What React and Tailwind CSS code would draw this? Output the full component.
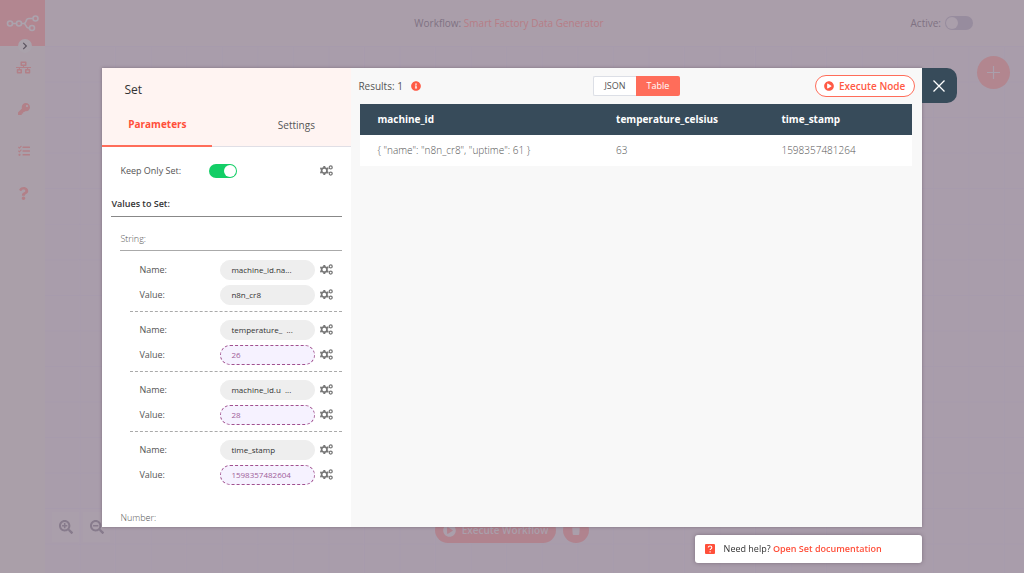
import React, { useState } from "react";
import {
  FaNetworkWired, FaKey, FaTasks, FaQuestion, FaSearchPlus, FaSearchMinus,
  FaPlayCircle, FaTrash, FaInfoCircle, FaChevronRight,
} from "react-icons/fa";

const strings = [
  { name: "machine_id.na...", value: "n8n_cr8", expression: false },
  { name: "temperature_  ...", value: "26", expression: true },
  { name: "machine_id.u  ...", value: "28", expression: true },
  { name: "time_stamp", value: "1598357482604", expression: true },
];

const navItems = [
  { label: "Workflows", Icon: FaNetworkWired, size: 15 },
  { label: "Credentials", Icon: FaKey, size: 12 },
  { label: "Executions", Icon: FaTasks, size: 12 },
  { label: "Help", Icon: FaQuestion, size: 13 },
];

function Logo() {
  return (
    <svg width="34" height="18" viewBox="0 0 34 18" fill="none" stroke="#aba3ad" strokeWidth="1.6" aria-hidden="true">
      <circle cx="4" cy="9.5" r="2.5" />
      <circle cx="13" cy="9.5" r="2.5" />
      <circle cx="29.5" cy="4.5" r="2.5" />
      <circle cx="26" cy="14" r="2.5" />
      <path d="M6.6 9.5h3.8M15.6 9.5h2.2c3.2 0 1.2-5 5-5h4.1M17.8 9.5c2.6 0 1.8 4.5 4.4 4.5h1.2" />
    </svg>
  );
}

function Sidebar() {
  return (
    <aside className="flex w-[45px] shrink-0 flex-col bg-[#aa9fa9]">
      <a href="#home" aria-label="Home" className="relative flex h-[46px] items-center justify-center bg-[#b28690]">
        <Logo />
        <span className="absolute -bottom-[7px] left-[18px] flex size-[14px] items-center justify-center rounded-full bg-[#aaa2ab]">
          <FaChevronRight size={8} color="#5c5561" />
        </span>
      </a>
      <nav className="flex flex-col pl-[2px]">
        {navItems.map(({ label, Icon, size }) => (
          <a key={label} href="#nav" aria-label={label} className="flex h-[42px] items-center justify-center text-[#b28088]">
            <Icon size={size} />
          </a>
        ))}
      </nav>
    </aside>
  );
}

function Canvas() {
  return (
    <div className="relative flex-1">
      <svg className="absolute inset-0 size-full" aria-hidden="true">
        <defs>
          <pattern id="grid" width="35.55" height="35.55" patternUnits="userSpaceOnUse">
            <path d="M0 0.5H36M35 0V36" stroke="#a79bac" strokeWidth="1" fill="none" />
          </pattern>
        </defs>
        <rect width="100%" height="100%" fill="url(#grid)" />
      </svg>
      <button aria-label="Add node" className="absolute top-[10px] right-[14px] flex size-[33px] items-center justify-center rounded-full bg-[#b2868f]">
        <svg width="13" height="13" viewBox="0 0 13 13" stroke="#aa9fab" strokeWidth="1.2"><path d="M6.5 0v13M0 6.5h13" /></svg>
      </button>
      <div className="absolute bottom-[31px] left-[7px] flex gap-1 text-[#877b8c]">
        <button aria-label="Zoom in" className="flex h-[30px] w-[27px] items-center justify-center bg-[#aa9fab]"><FaSearchPlus size={14} /></button>
        <button aria-label="Zoom out" className="flex h-[30px] w-[27px] items-center justify-center bg-[#aa9fab]"><FaSearchMinus size={14} /></button>
      </div>
      <div className="absolute inset-x-0 bottom-[30px] flex justify-center gap-[7px] pr-[45px] text-[#aa9fab]">
        <button className="flex h-[26px] w-[121px] items-center justify-center gap-[6px] rounded-full bg-[#b0838e] text-[10px] font-semibold">
          <FaPlayCircle size={13} />Execute Workflow
        </button>
        <button aria-label="Clear data" className="flex size-[26px] items-center justify-center rounded-full bg-[#b0838e]"><FaTrash size={10} /></button>
      </div>
    </div>
  );
}

function OptionsButton() {
  return (
    <button aria-label="Parameter options" className="flex w-[13px] justify-center">
      <svg width="13" height="11" viewBox="0 0 13 11" fill="none" stroke="#777" aria-hidden="true">
        <circle cx="4.3" cy="5.5" r="2.7" strokeWidth="1.7" />
        <path d="M4.3 0.9v1.6M4.3 8.5v1.6M0.3 3.2l1.4 0.8M6.9 7l1.4 0.8M0.3 7.8l1.4-0.8M6.9 4l1.4-0.8" strokeWidth="2" />
        <circle cx="10.7" cy="2.4" r="1.5" strokeWidth="1.3" />
        <circle cx="10.7" cy="8.6" r="1.5" strokeWidth="1.3" />
      </svg>
    </button>
  );
}

function Field({ id, label, value, expression }) {
  return (
    <div className="flex h-[25px] items-center pl-[9px]">
      <label htmlFor={id} className="flex-1 text-[#555]">{label}</label>
      <input
        id={id}
        defaultValue={value}
        className={
          expression
            ? "h-[20px] w-[95px] rounded-full border border-dashed border-[#a0508f] bg-[#f6f2ff] px-[10px] text-[8px] text-[#a0609a] outline-none"
            : "h-[20px] w-[95px] rounded-full border border-[#eee] bg-[#eee] px-[10px] text-[8px] text-[#333] outline-none"
        }
      />
      <div className="mr-[9px] ml-[5px]"><OptionsButton /></div>
    </div>
  );
}

function Parameters() {
  const [keepOnly, setKeepOnly] = useState(true);
  return (
    <section className="flex w-[249px] shrink-0 flex-col overflow-hidden bg-white text-[9px]">
      <header className="bg-[#fff4f2]">
        <h1 className="px-[22px] pt-[13px] text-[12px] leading-[18px] font-medium text-[#333]">Set</h1>
        <div role="tablist" className="mt-[9px] flex justify-between border-b border-[#e0dfe6]">
          <button role="tab" aria-selected="true" className="-mb-px h-[39px] w-[110px] border-b-2 border-[#ff6d5a] pb-[4px] text-[10px] font-bold text-[#ff4f3a]">Parameters</button>
          <button role="tab" aria-selected="false" className="h-[38px] w-[110px] pb-[4px] text-[10px] text-[#555]">Settings</button>
        </div>
      </header>
      <div className="min-h-0 flex-1 overflow-hidden px-[9px]">
        <div className="mt-[11px] flex h-[25px] items-center pl-[9px]">
          <label htmlFor="keep-only" className="w-[89px] text-[#555]">Keep Only Set:</label>
          <span className="relative flex h-[14px] w-[28px]">
            <input id="keep-only" type="checkbox" checked={keepOnly} onChange={(e) => setKeepOnly(e.target.checked)} className="peer size-full appearance-none rounded-full bg-[#bbb] checked:bg-[#13ce66]" />
            <span className="pointer-events-none absolute top-[1px] left-[1px] size-[12px] rounded-full bg-white peer-checked:left-[15px]" />
          </span>
          <div className="mr-[9px] ml-auto"><OptionsButton /></div>
        </div>
        <h2 className="mt-[13px] border-b border-[#888] pb-[4px] leading-[16px] font-semibold text-[#333]">Values to Set:</h2>
        <div className="pl-[9px]">
          <h3 className="mt-[14px] border-b border-[#aaa] pb-[3px] leading-[16px] font-light text-[#555]">String:</h3>
          <div className="pt-px pl-[10px]">
            {strings.map((s, i) => (
              <div key={s.name} className="border-b border-dashed border-[#aaa] pt-[5px] pb-[4px] last:border-transparent">
                <Field id={"name-" + i} label="Name:" value={s.name} />
                <Field id={"value-" + i} label="Value:" value={s.value} expression={s.expression} />
              </div>
            ))}
          </div>
          <h3 className="mt-[18px] leading-[16px] font-light text-[#555]">Number:</h3>
        </div>
      </div>
    </section>
  );
}

function Results() {
  return (
    <section className="min-w-0 flex-1 bg-[#f8f8f8]">
      <div className="grid h-[36px] grid-cols-[1fr_auto_1fr] items-center px-[7px]">
        <div className="flex items-center gap-[8px] text-[10px] text-[#555]">
          Results: 1 <FaInfoCircle size={10} color="#ff5a45" />
        </div>
        <div className="flex h-[20px] text-[9px]">
          <button className="w-[43px] rounded-l-[2px] border border-r-0 border-[#dcdfe6] bg-white text-[#555]">JSON</button>
          <button className="w-[44px] rounded-r-[2px] bg-[#ff6d5a] text-white">Table</button>
        </div>
        <button className="flex h-[22px] w-[100px] items-center justify-center gap-[5px] justify-self-end rounded-full border border-[#ff6d5a] bg-white text-[10px] font-semibold text-[#ff5a45]">
          <FaPlayCircle size={10} />Execute Node
        </button>
      </div>
      <div className="pr-[10px] pl-[9px]">
        <table className="w-full table-fixed text-left text-[10px]">
          <thead className="bg-[#374b5a] text-white">
            <tr className="h-[31px]">
              <th className="w-[43.3%] pl-[17px] font-bold">machine_id</th>
              <th className="w-[30%] pl-[17px] font-bold">temperature_celsius</th>
              <th className="pl-[17px] font-bold">time_stamp</th>
            </tr>
          </thead>
          <tbody className="bg-white font-light text-[#555]">
            <tr className="h-[31px]">
              <td className="pl-[17px]">{'{ "name": "n8n_cr8", "uptime": 61 }'}</td>
              <td className="pl-[17px]">63</td>
              <td className="pl-[17px]">1598357481264</td>
            </tr>
          </tbody>
        </table>
      </div>
    </section>
  );
}

export default function App() {
  return (
    <div className="flex h-screen overflow-hidden bg-[#a99dab] font-['Open_Sans',sans-serif]">
      <Sidebar />
      <main className="flex min-w-0 flex-1 flex-col">
        <header className="grid h-[46px] grid-cols-[1fr_auto_1fr] items-center bg-[#aa9eaa] pr-[51px] text-[10px] text-[#7f7283]">
          <p className="col-start-2">Workflow: <a href="#workflow" className="text-[#b77d86]">Smart Factory Data Generator</a></p>
          <label className="flex items-center gap-[4px] justify-self-end">
            Active:
            <span className="relative flex h-[14px] w-[28px]">
              <input type="checkbox" className="size-full appearance-none rounded-full bg-[#978c9e]" />
              <span className="pointer-events-none absolute top-[1px] left-[1px] size-[12px] rounded-full bg-[#aa9fab]" />
            </span>
          </label>
        </header>
        <Canvas />
      </main>

      <div role="dialog" aria-label="Set" className="fixed inset-x-[10%] top-[68px] bottom-[46px] flex shadow-[0_0_3px_rgba(60,40,60,0.4)]">
        <Parameters />
        <Results />
        <button aria-label="Close" className="absolute top-0 left-full flex size-[35px] items-center justify-center rounded-r-[10px] bg-[#374b5a]">
          <svg width="12" height="12" viewBox="0 0 12 12" stroke="#fff" strokeWidth="1.3"><path d="M0.5 0.5l11 11M11.5 0.5l-11 11" /></svg>
        </button>
      </div>

      <div className="fixed right-[10%] bottom-[10px] flex h-[28px] w-[227px] items-center gap-[9px] rounded-[3px] bg-white px-[10px] text-[9px] font-medium text-[#333] shadow-[0_0_4px_rgba(60,40,60,0.4)]">
        <svg width="10" height="10" viewBox="0 0 10 10" fill="none" aria-hidden="true">
          <rect width="10" height="10" rx="1" fill="#ff4f3a" />
          <path d="M3.3 3.6c0-2.2 3.5-2.1 3.5 0 0 1.3-1.7 1.2-1.7 2.5M5.1 7.2v1.2" stroke="#fff" strokeWidth="1.1" />
        </svg>
        <p>Need help? <a href="#docs" className="font-semibold text-[#ff4f3a]">Open Set documentation</a></p>
      </div>
    </div>
  );
}
